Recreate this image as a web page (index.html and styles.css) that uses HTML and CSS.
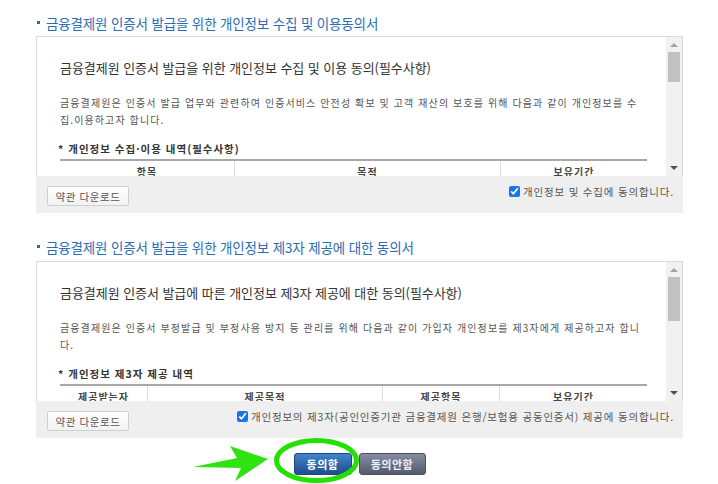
FILE: index.html
```html
<!DOCTYPE html>
<html lang="ko">
<head>
<meta charset="utf-8">
<link rel="stylesheet" href="styles.css">
</head>
<body>
<div class="page">
  <section class="agree">
    <h2 class="sec-title first"><span class="dot"></span>금융결제원 인증서 발급을 위한 개인정보 수집 및 이용동의서</h2>
    <div class="box">
      <div class="scroll">
        <div class="content">
          <h3 class="doc-title">금융결제원 인증서 발급을 위한 개인정보 수집 및 이용 동의(필수사항)</h3>
          <p class="doc-text">금융결제원은 인증서 발급 업무와 관련하여 인증서비스 안전성 확보 및 고객 재산의 보호를 위해 다음과 같이 개인정보를 수<br>집.이용하고자 합니다.</p>
          <h4 class="doc-sub">* 개인정보 수집·이용 내역(필수사항)</h4>
          <div class="tbl">
            <div class="th w1">항목</div>
            <div class="th w2">목적</div>
            <div class="th w3">보유기간</div>
          </div>
        </div>
        <div class="sbar">
          <span class="arr up"></span>
          <span class="thumb t1"></span>
          <span class="track"></span>
          <span class="arr down"></span>
        </div>
      </div>
      <div class="foot">
        <button class="dl">약관 다운로드</button>
        <label class="chk"><input type="checkbox" checked>개인정보 및 수집에 동의합니다.</label>
      </div>
    </div>
  </section>

  <section class="agree">
    <h2 class="sec-title second"><span class="dot"></span>금융결제원 인증서 발급을 위한 개인정보 제3자 제공에 대한 동의서</h2>
    <div class="box">
      <div class="scroll">
        <div class="content">
          <h3 class="doc-title">금융결제원 인증서 발급에 따른 개인정보 제3자 제공에 대한 동의(필수사항)</h3>
          <p class="doc-text">금융결제원은 인증서 부정발급 및 부정사용 방지 등 관리를 위해 다음과 같이 가입자 개인정보를 제3자에게 제공하고자 합니<br>다.</p>
          <h4 class="doc-sub">* 개인정보 제3자 제공 내역</h4>
          <div class="tbl">
            <div class="th c1">제공받는자</div>
            <div class="th c2">제공목적</div>
            <div class="th c3">제공항목</div>
            <div class="th c4">보유기간</div>
          </div>
        </div>
        <div class="sbar">
          <span class="arr up"></span>
          <span class="thumb t2"></span>
          <span class="track"></span>
          <span class="arr down"></span>
        </div>
      </div>
      <div class="foot">
        <button class="dl">약관 다운로드</button>
        <label class="chk"><input type="checkbox" checked>개인정보의 제3자(공인인증기관 금융결제원 은행/보험용 공동인증서) 제공에 동의합니다.</label>
      </div>
    </div>
  </section>

  <div class="actions">
    <button class="btn agree-btn">동의함</button>
    <button class="btn deny-btn">동의안함</button>
    <svg class="mark" width="647" height="47" viewBox="0 0 647 47">
      <polygon points="157,29 201,20 194,8 232,21 199,43 205,30" fill="#2fe212"/>
      <ellipse cx="280.5" cy="22.5" rx="40" ry="20" fill="none" stroke="#22e000" stroke-width="5"/>
    </svg>
  </div>
</div>
</body>
</html>
```

FILE: styles.css
```css
* { box-sizing: border-box; }
html, body { margin: 0; padding: 0; background: #fff; }
body {
  font-family: "Noto Sans CJK KR", "Noto Sans", sans-serif;
  color: #333;
}
.page {
  width: 683px;
  padding-left: 36px;
}
.sec-title {
  margin: 0;
  font-size: 13.5px;
  font-weight: normal;
  line-height: 18px;
  color: #2b6db3;
  display: flex;
  align-items: center;
  letter-spacing: -0.15px;
}
.sec-title.first { padding: 14px 0 4px 0; }
.sec-title.second { padding: 25px 0 5px 0; }
.dot {
  width: 3px;
  height: 3px;
  background: #2b6db3;
  margin: 0 6px 0 1px;
  position: relative;
  top: -1px;
}
.box { width: 647px; }
.scroll {
  height: 140px;
  border: 1px solid #dcdcdc;
  border-bottom: none;
  display: flex;
  overflow: hidden;
}
.content {
  flex: 1;
  padding: 22px 19px 0 23px;
  overflow: hidden;
}
.doc-title {
  margin: 0;
  font-size: 13px;
  font-weight: normal;
  line-height: 18px;
  color: #333;
  letter-spacing: -0.05px;
}
.doc-text {
  margin: 17px 0 0 0;
  font-size: 10px;
  line-height: 17px;
  color: #555;
  letter-spacing: 1.1px;
  white-space: nowrap;
}
.doc-sub {
  margin: 13px 0 0 -2px;
  font-size: 10.5px;
  line-height: 16px;
  font-weight: bold;
  color: #333;
  letter-spacing: 1px;
}
.tbl {
  margin-top: 2px;
  width: 587px;
  border-top: 2px solid #a8a8a8;
  display: flex;
  height: 24px;
}
.th {
  font-size: 10px;
  font-weight: bold;
  color: #444;
  text-align: center;
  line-height: 22px;
  letter-spacing: 1px;
  border-left: 1px solid #dcdcdc;
}
.th:first-child { border-left: none; }
.w1 { width: 174px; }
.w2 { width: 266px; }
.w3 { flex: 1; }
.c1 { width: 87px; }
.c2 { width: 235px; }
.c3 { width: 117px; }
.c4 { flex: 1; }
.sbar {
  width: 16px;
  background: #f1f1f1;
  display: flex;
  flex-direction: column;
  align-items: center;
}
.arr {
  width: 0;
  height: 0;
  border-left: 4px solid transparent;
  border-right: 4px solid transparent;
}
.arr.up {
  border-bottom: 4px solid #a3a3a3;
  margin: 6px 0 5px;
}
.arr.down {
  border-top: 4px solid #505050;
  margin: 0 0 6px;
}
.thumb {
  width: 12px;
  background: #c1c1c1;
}
.t1 { height: 30px; }
.t2 { height: 44px; }
.track { flex: 1; }
.foot {
  height: 37px;
  background: #efefef;
  display: flex;
  justify-content: space-between;
  align-items: flex-start;
  padding: 10px 9px 0 11px;
}
.dl {
  width: 82px;
  height: 20px;
  padding: 0;
  font-family: inherit;
  font-size: 10.5px;
  color: #555;
  letter-spacing: 0.6px;
  background: linear-gradient(#ffffff, #f2f2f2);
  border: 1px solid #cfcfcf;
  border-radius: 2px;
}
.chk {
  display: flex;
  align-items: center;
  font-size: 10.5px;
  line-height: 11px;
  color: #555;
  letter-spacing: 0.8px;
}
.chk input {
  width: 11px;
  height: 11px;
  margin: 0 3px 0 0;
  accent-color: #1a73e8;
}
.actions {
  position: relative;
  width: 647px;
  height: 47px;
  display: flex;
  justify-content: center;
  gap: 7px;
  padding-top: 15px;
}
.btn {
  height: 22px;
  padding: 0;
  font-family: inherit;
  font-size: 11px;
  font-weight: bold;
  letter-spacing: 0.5px;
  border-radius: 3px;
  color: #fff;
}
.agree-btn {
  width: 58px;
  background: linear-gradient(#4183cb, #1e4e8e);
  border: 1px solid #1b4680;
}
.deny-btn {
  width: 67px;
  color: #eef0f6;
  background: linear-gradient(#878ca0, #555b6f);
  border: 1px solid #4b5063;
}
.mark {
  position: absolute;
  left: 0;
  top: 0;
  overflow: visible;
  pointer-events: none;
}
```
